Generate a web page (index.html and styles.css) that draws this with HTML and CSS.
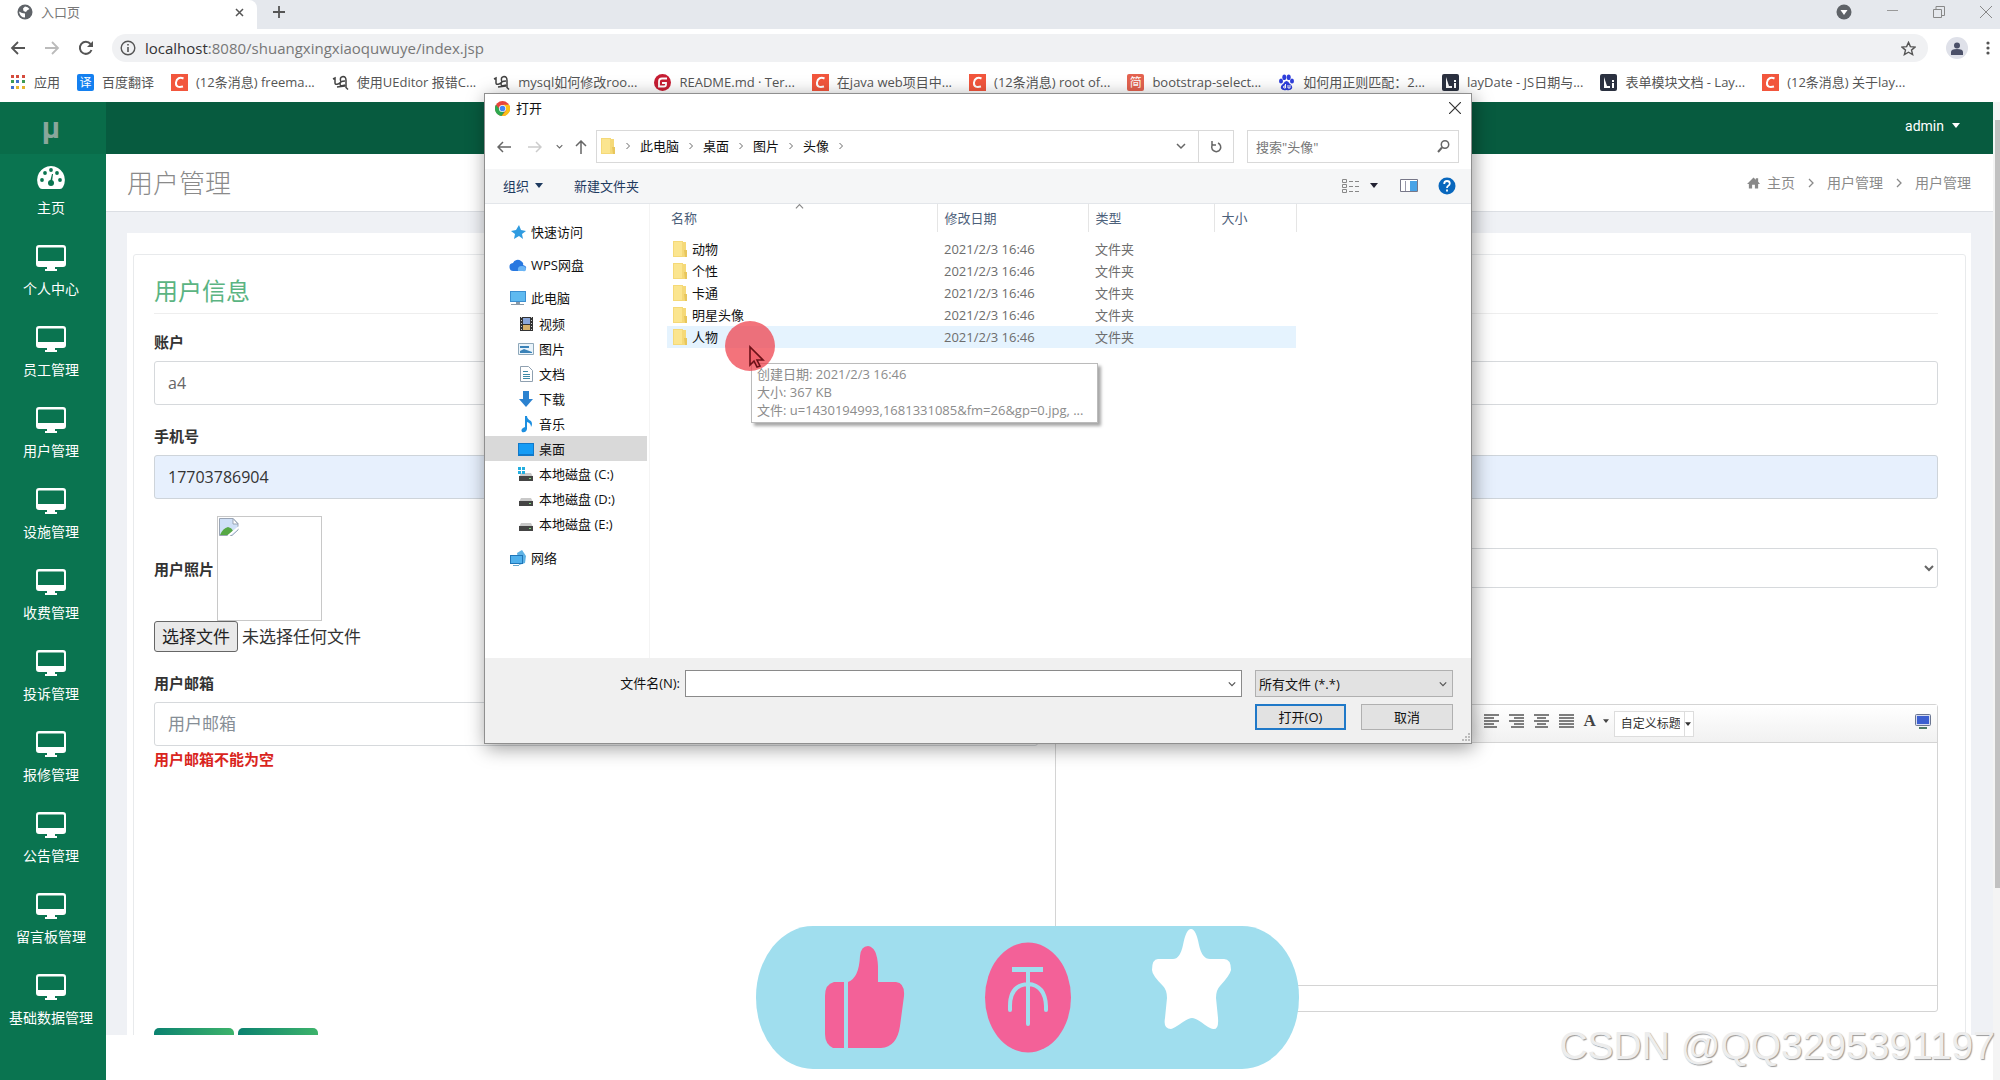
FILE: index.html
```html
<!DOCTYPE html>
<html lang="zh-CN">
<head>
<meta charset="utf-8">
<title>入口页</title>
<link rel="stylesheet" href="styles.css">
</head>
<body>
<svg class="defs" aria-hidden="true">
  <symbol id="monitor" viewBox="0 0 30 26"><path fill-rule="evenodd" d="M3 0h24q3 0 3 3v16q0 3-3 3h-8v2h2v2H9v-2h2v-2H3q-3 0-3-3V3q0-3 3-3zM3 2.500q-1 0-1 1V16h26V3.500q0-1-1-1z"/></symbol>
  <symbol id="folder" viewBox="0 0 16 18"><path fill="#f5d978" d="M1 1h10v1h3v15H1z"/><path fill="#fbe58f" d="M2 2h8v14H2z"/><path fill="#e8c65c" d="M12 10h3v7h-2z"/></symbol>
  <symbol id="csdn" viewBox="0 0 17 17"><path fill="#f2563d" d="M0 0h17v17H0z"/><path fill="none" stroke="#fff" stroke-width="2" d="M12.500 4.500C9 3 5.500 4 5 8.500s3 5 7 4"/></symbol>
  <symbol id="snail" viewBox="0 0 17 17"><path fill="none" stroke="#444" stroke-width="1.500" d="M1 5l2-1v5q0 2 3 1l3-2M9 8q-2-5 2-5.500 3 0 3 4v7l2 2M13 7q-5 0-5 3t5 1M5 13l8-1"/></symbol>
  <symbol id="lay" viewBox="0 0 17 17"><rect width="17" height="17" rx="2" fill="#2b3140"/><path fill="#fff" d="M4 3l3 9h3v2H4zM12 6h2v2h-2zM12 9h2v5h-2z"/></symbol>
  <symbol id="chev" viewBox="0 0 10 10"><path fill="none" stroke="currentColor" stroke-width="1.500" d="M1 3l4 4 4-4"/></symbol>
  <symbol id="gt" viewBox="0 0 8 10"><path fill="none" stroke="currentColor" stroke-width="1.300" d="M2 1l4 4-4 4"/></symbol>
  <symbol id="caret" viewBox="0 0 8 5"><path fill="currentColor" d="M0 0h8L4 5z"/></symbol>
  <symbol id="disk" viewBox="0 0 18 18"><path fill="#c9c9c9" d="M4 8h10l2 4H2z"/><path fill="#444" d="M2 11h14v5H2z"/><path fill="#7fd87f" d="M12 13h2v1h-2z"/></symbol>
</svg>

<header class="tabs">
  <div class="tab">
    <svg width="16" height="16" viewBox="0 0 16 16"><circle cx="8" cy="8" r="7.500" fill="#5f6368"/><path fill="#fff" d="M8 2.500q3 0 4.500 2.500L10 6.500 9 8 6.500 7 6 4.500zM2 7.500l3 1.500 3 .5v4q-5 0-6-6z"/></svg>
    <span>入口页</span>
    <button class="plain tab-close" aria-label="关闭标签页"><svg width="9" height="9" viewBox="0 0 9 9"><path stroke="#555" stroke-width="1.500" d="M1 1l7 7M8 1L1 8"/></svg></button>
  </div>
  <button class="plain" aria-label="新标签页"><svg width="12" height="12" viewBox="0 0 12 12"><path stroke="#555" stroke-width="1.800" d="M6 0v12M0 6h12"/></svg></button>
  <div class="window-controls">
    <svg width="16" height="16" viewBox="0 0 16 16"><circle cx="8" cy="8" r="7.500" fill="#5f6368"/><path fill="#fff" d="M4.500 6h7L8 11z"/></svg>
    <button class="plain" aria-label="最小化"><svg width="11" height="12" viewBox="0 0 11 12"><path stroke="#999" d="M0 4.500h11"/></svg></button>
    <button class="plain" aria-label="还原"><svg width="12" height="12" viewBox="0 0 12 12"><path fill="none" stroke="#888" d="M.5 3.500h8v8h-8zM3 3V.5h8.500v9H9"/></svg></button>
    <button class="plain" aria-label="关闭"><svg width="12" height="12" viewBox="0 0 12 12"><path stroke="#888" d="M0 0l12 12M12 0L0 12"/></svg></button>
  </div>
</header>

<div class="toolbar">
  <button class="plain" aria-label="后退"><svg width="16" height="16" viewBox="0 0 16 16"><path fill="none" stroke="#555" stroke-width="1.800" d="M15 8H2M8 2L2 8l6 6"/></svg></button>
  <button class="plain" aria-label="前进"><svg width="16" height="16" viewBox="0 0 16 16"><path fill="none" stroke="#bbb" stroke-width="1.800" d="M1 8h13M8 2l6 6-6 6"/></svg></button>
  <button class="plain" aria-label="刷新"><svg width="16" height="16" viewBox="0 0 16 16"><path fill="none" stroke="#555" stroke-width="2" d="M13.500 10A6 6 0 1 1 12.500 4"/><path fill="#555" d="M15 1v6H9z"/></svg></button>
  <div class="omnibox">
    <svg width="16" height="16" viewBox="0 0 16 16"><circle cx="8" cy="8" r="6.800" fill="none" stroke="#555" stroke-width="1.400"/><path stroke="#555" stroke-width="1.600" d="M8 7v5M8 4v1.600"/></svg>
    <span class="url"><b>localhost</b>:8080/shuangxingxiaoquwuye/index.jsp</span>
    <svg width="15" height="15" viewBox="0 0 16 16"><path fill="none" stroke="#555" stroke-width="1.500" d="M8 1.500l2 4.500 5 .5-3.800 3.200 1.200 4.800L8 12l-4.400 2.500 1.200-4.800L1 6.500 6 6z"/></svg>
  </div>
  <button class="plain avatar" aria-label="用户"><svg width="12" height="13" viewBox="0 0 12 13"><circle cx="6" cy="3.500" r="3" fill="#4b5068"/><path fill="#4b5068" d="M0 13v-3q0-3 6-3t6 3v3z"/></svg></button>
  <button class="plain" aria-label="菜单"><svg width="4" height="14" viewBox="0 0 4 14"><g fill="#555"><circle cx="2" cy="2" r="1.600"/><circle cx="2" cy="7" r="1.600"/><circle cx="2" cy="12" r="1.600"/></g></svg></button>
</div>

<nav class="bookmarks" aria-label="书签">
  <a href="#"><svg width="16" height="16" viewBox="0 0 16 16"><path fill="#d54b3d" d="M1 1h3v3H1zM6 1h3v3H6zM12 1h3v3h-3z"/><path fill="#3d9a56" d="M1 6h3v3H1zM12 6h3v3h-3z"/><path fill="#4070d0" d="M6 6h3v3H6zM1 12h3v3H1z"/><path fill="#e5b32d" d="M6 12h3v3H6zM12 12h3v3h-3z"/></svg><span>应用</span></a>
  <a href="#"><i class="badge blue">译</i><span>百度翻译</span></a>
  <a href="#"><svg width="17" height="17"><use href="#csdn"/></svg><span>(12条消息) freema...</span></a>
  <a href="#"><svg width="17" height="17"><use href="#snail"/></svg><span>使用UEditor 报错C...</span></a>
  <a href="#"><svg width="17" height="17"><use href="#snail"/></svg><span>mysql如何修改roo...</span></a>
  <a href="#"><svg width="17" height="17" viewBox="0 0 17 17"><circle cx="8.500" cy="8.500" r="8.500" fill="#c71d33"/><path fill="none" stroke="#fff" stroke-width="1.800" d="M13 4.500H8q-3 0-3 3v5h5q2 0 2-2V9H8"/></svg><span>README.md · Ter...</span></a>
  <a href="#"><svg width="17" height="17"><use href="#csdn"/></svg><span>在java web项目中...</span></a>
  <a href="#"><svg width="17" height="17"><use href="#csdn"/></svg><span>(12条消息) root of...</span></a>
  <a href="#"><i class="badge red">简</i><span>bootstrap-select...</span></a>
  <a href="#"><svg width="17" height="17" viewBox="0 0 17 17"><g fill="#2f3fdc"><ellipse cx="3" cy="7" rx="2" ry="2.600"/><ellipse cx="6.300" cy="3.200" rx="2" ry="2.800"/><ellipse cx="10.700" cy="3.200" rx="2" ry="2.800"/><ellipse cx="14" cy="7" rx="2" ry="2.600"/><path d="M8.500 7q2 0 3 2.500 3.500 2.500 2.500 5-1.500 2.500-5.500 1.500-4 1-5.500-1.500-1-2.500 2.500-5 1-2.500 3-2.500z"/></g><path fill="none" stroke="#fff" d="M7.500 10v4H6q-1-1 0-2h1M10 11v3h2v-3"/></svg><span>如何用正则匹配：2...</span></a>
  <a href="#"><svg width="17" height="17"><use href="#lay"/></svg><span>layDate - JS日期与...</span></a>
  <a href="#"><svg width="17" height="17"><use href="#lay"/></svg><span>表单模块文档 - Lay...</span></a>
  <a href="#"><svg width="17" height="17"><use href="#csdn"/></svg><span>(12条消息) 关于lay...</span></a>
</nav>

<div class="app">
  <aside class="sidebar">
    <div class="logo">μ</div>
    <nav aria-label="主菜单">
      <a href="#"><svg width="28" height="26" viewBox="0 0 28 26"><path d="M14 2a14 14 0 0 1 12 21q-1 2-3 2H5q-2 0-3-2A14 14 0 0 1 14 2z"/><g fill="#0a7450"><circle cx="5" cy="16" r="1.900"/><circle cx="8" cy="9" r="1.900"/><circle cx="14" cy="6" r="1.900"/><circle cx="20" cy="9" r="1.900"/><circle cx="23" cy="16" r="1.900"/><circle cx="14" cy="19" r="3"/><path d="M13 18l2-8h1l-1 8z"/></g></svg>主页</a>
      <a href="#"><svg width="30" height="26"><use href="#monitor"/></svg>个人中心</a>
      <a href="#"><svg width="30" height="26"><use href="#monitor"/></svg>员工管理</a>
      <a href="#"><svg width="30" height="26"><use href="#monitor"/></svg>用户管理</a>
      <a href="#"><svg width="30" height="26"><use href="#monitor"/></svg>设施管理</a>
      <a href="#"><svg width="30" height="26"><use href="#monitor"/></svg>收费管理</a>
      <a href="#"><svg width="30" height="26"><use href="#monitor"/></svg>投诉管理</a>
      <a href="#"><svg width="30" height="26"><use href="#monitor"/></svg>报修管理</a>
      <a href="#"><svg width="30" height="26"><use href="#monitor"/></svg>公告管理</a>
      <a href="#"><svg width="30" height="26"><use href="#monitor"/></svg>留言板管理</a>
      <a href="#"><svg width="30" height="26"><use href="#monitor"/></svg>基础数据管理</a>
    </nav>
  </aside>

  <div class="page">
    <div class="topbar"><button class="plain account">admin <svg width="8" height="5"><use href="#caret"/></svg></button></div>
    <div class="titlebar">
      <h1>用户管理</h1>
      <nav class="breadcrumb" aria-label="位置">
        <a href="#"><svg width="13" height="12" viewBox="0 0 14 12"><path fill="#888" d="M7 0l2.500 2.400V1H12v3.700L14 7h-2v5H8.500V8h-3v4H2V7H0z"/></svg>主页</a>
        <svg width="8" height="10"><use href="#gt"/></svg>
        <a href="#">用户管理</a>
        <svg width="8" height="10"><use href="#gt"/></svg>
        <span>用户管理</span>
      </nav>
    </div>
    <main class="content">
      <div class="panel">
        <form class="card">
          <h2>用户信息</h2>
          <div class="row">
            <div class="group"><label for="account">账户</label><input class="field" id="account" value="a4"></div>
            <div class="group end"><input class="field" aria-label="用户姓名"></div>
          </div>
          <div class="row tight">
            <div class="group"><label for="phone">手机号</label><input class="field filled" id="phone" value="17703786904"></div>
            <div class="group end"><input class="field filled" aria-label="身份证号"></div>
          </div>
          <div class="row">
            <div class="group">
              <div class="photo"><span class="caption">用户照片</span>
                <div class="preview" role="img" aria-label="用户照片"><svg width="20" height="18" viewBox="0 0 20 18"><path fill="#cfe0f7" stroke="#9aa5b5" d="M.5.5H14l5 5V12l-6 5.500H.5z"/><path fill="#fff" stroke="#9aa5b5" d="M14 .5V6h5z"/><path fill="#56a845" d="M1 17q3-7 8-8 4 1 5 4l-4 4z"/><path stroke="#fff" stroke-width="2" d="M9 18L20 9"/></svg></div>
              </div>
              <div class="file"><button type="button">选择文件</button><span>未选择任何文件</span></div>
            </div>
            <div class="group lower"><select class="field select" aria-label="性别"><option></option></select></div>
          </div>
          <div class="row last">
            <div class="group"><label for="mail">用户邮箱</label><input class="field" id="mail" placeholder="用户邮箱"><p class="error">用户邮箱不能为空</p></div>
            <div class="group lower">
              <div class="editor">
                <div class="editor-bar">
                  <button type="button" class="plain" aria-label="左对齐"><svg width="16" height="14" viewBox="0 0 16 14"><path stroke="#555" stroke-width="1.300" d="M0 1h15M0 4h10M0 7h15M0 10h10M0 13h13"/></svg></button>
                  <button type="button" class="plain" aria-label="右对齐"><svg width="16" height="14" viewBox="0 0 16 14"><path stroke="#555" stroke-width="1.300" d="M0 1h15M5 4h10M0 7h15M5 10h10M2 13h13"/></svg></button>
                  <button type="button" class="plain" aria-label="居中"><svg width="16" height="14" viewBox="0 0 16 14"><path stroke="#555" stroke-width="1.300" d="M0 1h15M3 4h9M0 7h15M3 10h9M1 13h13"/></svg></button>
                  <button type="button" class="plain" aria-label="两端对齐"><svg width="16" height="14" viewBox="0 0 16 14"><path stroke="#555" stroke-width="1.300" d="M0 1h15M0 4h15M0 7h15M0 10h15M0 13h15"/></svg></button>
                  <button type="button" class="plain font" aria-label="字体">A<svg width="6" height="4"><use href="#caret"/></svg></button>
                  <div class="heading-select"><select aria-label="标题"><option>自定义标题</option></select><svg width="6" height="4"><use href="#caret"/></svg></div>
                  <button type="button" class="plain full" aria-label="全屏"><svg width="16" height="15" viewBox="0 0 16 15"><rect x=".5" y=".5" width="15" height="11" rx="1" fill="#d6dcf0" stroke="#6a7590"/><path fill="#3c5fd0" d="M2 2h12v8H2z"/><path fill="#4d7a66" d="M4 13h8v2H4z"/></svg></button>
                </div>
                <textarea class="editor-body" aria-label="内容"></textarea>
                <div class="editor-foot"></div>
              </div>
            </div>
          </div>
          <div class="actions"><button type="button" aria-label="提交"></button><button type="button" aria-label="返回"></button></div>
        </form>
      </div>
    </main>
  </div>
  <div class="scrollbar"><div class="thumb"></div></div>
</div>

<section class="dialog" role="dialog" aria-label="打开">
  <div class="dialog-title">
    <svg width="15" height="15" viewBox="0 0 16 16"><circle cx="8" cy="8" r="8" fill="#e8453c"/><path fill="#2fa84f" d="M1 4a8 8 0 0 0 6 12l4-6H6z"/><path fill="#fbc116" d="M15 4H9l3 6-5 6A8 8 0 0 0 15 4z"/><circle cx="8" cy="8" r="3.800" fill="#fff"/><circle cx="8" cy="8" r="3" fill="#4286f5"/></svg>
    <span>打开</span>
    <button class="plain" aria-label="关闭"><svg width="12" height="12" viewBox="0 0 12 12"><path stroke="#333" stroke-width="1.200" d="M0 0l12 12M12 0L0 12"/></svg></button>
  </div>
  <div class="address">
    <div class="arrows">
      <svg width="14" height="12" viewBox="0 0 14 12"><path fill="none" stroke="#666" stroke-width="1.500" d="M14 6H1M6 1L1 6l5 5"/></svg>
      <svg width="14" height="12" viewBox="0 0 14 12"><path fill="none" stroke="#ccc" stroke-width="1.500" d="M0 6h13M8 1l5 5-5 5"/></svg>
      <svg width="7" height="7" class="grey"><use href="#chev"/></svg>
      <svg width="12" height="14" viewBox="0 0 12 14"><path fill="none" stroke="#666" stroke-width="1.500" d="M6 14V1M1 6l5-5 5 5"/></svg>
    </div>
    <div class="path">
      <svg class="path-icon" width="16" height="18"><use href="#folder"/></svg>
      <svg width="6" height="8"><use href="#gt"/></svg><span>此电脑</span>
      <svg width="6" height="8"><use href="#gt"/></svg><span>桌面</span>
      <svg width="6" height="8"><use href="#gt"/></svg><span>图片</span>
      <svg width="6" height="8"><use href="#gt"/></svg><span>头像</span>
      <svg width="6" height="8"><use href="#gt"/></svg>
      <svg class="path-drop" width="10" height="10"><use href="#chev"/></svg>
      <button class="plain refresh" aria-label="刷新"><svg width="12" height="13" viewBox="0 0 12 13"><path fill="none" stroke="#666" stroke-width="1.500" d="M8 3a4.500 4.500 0 1 1-5 1M2 1v4h4"/></svg></button>
    </div>
    <div class="search"><input aria-label="搜索" placeholder='搜索"头像"'><svg width="13" height="13" viewBox="0 0 13 13"><circle cx="8" cy="4.500" r="3.700" fill="none" stroke="#666" stroke-width="1.500"/><path stroke="#666" stroke-width="2" d="M5 7.500L1 12"/></svg></div>
  </div>
  <div class="commands">
    <button class="plain">组织 <svg width="8" height="5"><use href="#caret"/></svg></button>
    <button class="plain">新建文件夹</button>
    <div class="views">
      <svg width="18" height="14" viewBox="0 0 18 14"><path fill="none" stroke="#888" d="M.5.5h4v3h-4zM.5 5.500h4v3h-4zM.5 10.500h4v3h-4zM7 2.500h4M13 2.500h4M7 7.500h4M13 7.500h4M7 12.500h4M13 12.500h4"/></svg>
      <svg width="8" height="5"><use href="#caret"/></svg>
      <svg class="pane-icon" width="18" height="13" viewBox="0 0 18 13"><path fill="#fff" stroke="#778" d="M.5.5h17v12H.5z"/><path fill="#49a3e6" d="M10 2h7v10h-7z"/><path stroke="#99a" d="M5.500 2v10"/></svg>
      <svg width="18" height="18" viewBox="0 0 18 18"><circle cx="9" cy="9" r="8.500" fill="#0867bd"/><path fill="none" stroke="#fff" stroke-width="1.800" d="M6.200 7q0-3 2.800-3t2.800 2.500Q11.800 8 10 9q-1 .6-1 2M9 12.500v2"/></svg>
    </div>
  </div>
  <div class="browser">
    <ul class="tree">
      <li><svg width="18" height="18" viewBox="0 0 18 18"><path fill="#2f9be0" d="M10 2l2 5 5 1-4 3 1 5-4-3-5 3 1-5-4-3 5-1z"/></svg>快速访问</li>
      <li><svg width="18" height="18" viewBox="0 0 18 18"><path fill="#2878e0" d="M5 15a4 4 0 0 1-1-8 5 5 0 0 1 8-2q3 2 2 4 4 1 3 4-1 2-3 2z"/><path fill="#6bb5f5" d="M9 15q-1-5 4-5 4 0 4 3t-3 2z"/></svg>WPS网盘</li>
      <li><svg width="18" height="18" viewBox="0 0 18 18"><path fill="#3c8fd0" d="M1 2h16v11H1z"/><path fill="#5fbaf0" d="M2 3h14v9H2z"/><path fill="#8a9aa8" d="M7 13h4v2h4v1H2v-1h5z"/></svg>此电脑</li>
      <li class="sub"><svg width="18" height="18" viewBox="0 0 18 18"><path fill="#333" d="M3 2h13v14H3z"/><path fill="#8aa6d8" d="M6 3h7v6H6z"/><path fill="#d6b06a" d="M6 10h7v5H6z"/><path stroke="#ccc" stroke-dasharray="1 2" d="M4.500 2v14M14.500 2v14"/></svg>视频</li>
      <li class="sub"><svg width="18" height="18" viewBox="0 0 18 18"><path fill="#eaf4fb" stroke="#8fa8ba" d="M1.500 3.500h15v11h-15z"/><path fill="#3a82b8" d="M3 11l4-2 8 3v1H3zM3 6h9v2H3z"/></svg>图片</li>
      <li class="sub"><svg width="18" height="18" viewBox="0 0 18 18"><path fill="#fff" stroke="#8fa0b0" d="M3.500 1.500h8l4 4v11h-12z"/><path stroke="#3c8aa8" d="M6 6.500h5M6 9.500h7M6 11.500h7M6 13.500h7"/></svg>文档</li>
      <li class="sub"><svg width="18" height="18" viewBox="0 0 18 18"><path fill="#2b82d0" d="M6 1h6v8h4l-7 8-7-8h4z"/></svg>下载</li>
      <li class="sub"><svg width="18" height="18" viewBox="0 0 18 18"><path fill="#1d8fe0" d="M8 1h2q0 3 4 5 2 3 0 6 0-4-4-5v7q-1 4-5 3-2-3 3-5z"/></svg>音乐</li>
      <li class="sub selected"><svg width="18" height="18" viewBox="0 0 18 18"><path fill="#1178c8" d="M1 3h16v13H1z"/><path fill="#159cf5" d="M2 4h14v10H2z"/></svg>桌面</li>
      <li class="sub"><svg width="18" height="18" viewBox="0 0 18 18"><use href="#disk"/><path fill="#22aee0" d="M1 2h3v3H1zM5 2h3v3H5zM1 6h3v3H1zM5 6h3v3H5z"/></svg>本地磁盘 (C:)</li>
      <li class="sub"><svg width="18" height="18"><use href="#disk"/></svg>本地磁盘 (D:)</li>
      <li class="sub"><svg width="18" height="18"><use href="#disk"/></svg>本地磁盘 (E:)</li>
      <li><svg width="18" height="18" viewBox="0 0 18 18"><path fill="#5fb2e4" d="M8 4l5-3 4 6-1 7-6 2z"/><path fill="#2076b8" d="M1 6h13v9H1z"/><path fill="#4fb0ec" d="M2 7h11v7H2z"/><path fill="#68a8cc" d="M4 16h6v1H4z"/></svg>网络</li>
    </ul>
    <div class="files">
      <svg class="sort" width="9" height="9" viewBox="0 0 10 10"><path fill="none" stroke="#888" stroke-width="1.300" d="M1 7l4-4 4 4"/></svg>
      <table>
        <colgroup><col class="c-name"><col class="c-date"><col class="c-type"><col class="c-size"></colgroup>
        <thead><tr><th>名称</th><th>修改日期</th><th>类型</th><th>大小</th></tr></thead>
        <tbody>
          <tr><td><svg width="16" height="18"><use href="#folder"/></svg>动物</td><td>2021/2/3 16:46</td><td>文件夹</td><td></td></tr>
          <tr><td><svg width="16" height="18"><use href="#folder"/></svg>个性</td><td>2021/2/3 16:46</td><td>文件夹</td><td></td></tr>
          <tr><td><svg width="16" height="18"><use href="#folder"/></svg>卡通</td><td>2021/2/3 16:46</td><td>文件夹</td><td></td></tr>
          <tr><td><svg width="16" height="18"><use href="#folder"/></svg>明星头像</td><td>2021/2/3 16:46</td><td>文件夹</td><td></td></tr>
          <tr class="hover"><td><svg width="16" height="18"><use href="#folder"/></svg>人物</td><td>2021/2/3 16:46</td><td>文件夹</td><td></td></tr>
        </tbody>
      </table>
    </div>
  </div>
  <div class="dialog-foot">
    <label for="filename">文件名(N):</label>
    <div class="combo"><input id="filename"><svg width="8" height="8"><use href="#chev"/></svg></div>
    <div class="combo type"><select aria-label="文件类型"><option>所有文件 (*.*)</option></select><svg width="8" height="8"><use href="#chev"/></svg></div>
    <div class="buttons"><button class="primary">打开(O)</button><button>取消</button></div>
    <svg class="grip" width="9" height="9" viewBox="0 0 9 9"><path fill="#bbb" d="M7 1h2v2H7zM7 4h2v2H7zM7 7h2v2H7zM4 4h2v2H4zM4 7h2v2H4zM1 7h2v2H1z"/></svg>
  </div>
</section>

<div class="tooltip" role="tooltip">创建日期: 2021/2/3 16:46<br>大小: 367 KB<br>文件: u=1430194993,1681331085&amp;fm=26&amp;gp=0.jpg, ...</div>
<svg class="pointer" width="50" height="50" viewBox="0 0 50 50"><circle cx="25" cy="25" r="25" fill="#ef3d48" fill-opacity=".72"/><path fill="#f0606a" stroke="#6b1118" stroke-width="1.600" d="M25 26v18l4-4 3 6 3-1-3-6h6z"/></svg>

<div class="reactions">
  <svg viewBox="0 0 543 143" preserveAspectRatio="none">
    <rect width="543" height="143" rx="57" ry="71" fill="#a0deee"/>
    <g fill="#f36198"><path d="M88 56v66H77q-8-4-8-14V70q0-12 9-14z"/><path d="M92 122V56q11-4 12-26 1-10 8-10 9 1 10 20v16h18q9 1 8 14l-4 30q-3 21-19 22z"/><ellipse cx="272" cy="71.500" rx="43" ry="55"/></g>
    <g fill="none" stroke="#a0deee"><path stroke-width="5" d="M256 43.500h31"/><path stroke-width="4" stroke-linecap="round" d="M272 44v54M254 84v-4q0-21 18-22 17 1 18 22v4"/></g>
    <path fill="#fff" d="M435 3q5 0 8 16 3 14 11 14h14q7 0 7 11-1 5-11 16-4 4-4 12l2 20q1 12-5 11-3 0-12-7-6-4-9-4t-9 4q-10 7-12 7-8 0-6-11l2-20q0-8-4-12-11-11-11-16 0-12 7-11h14q7 0 10-14 3-16 8-16z"/>
  </svg>
</div>
<div class="watermark">CSDN @QQ3295391197</div>
</body>
</html>
```
FILE: styles.css
```css
* { box-sizing: border-box; }
body {
  margin: 0;
  height: 100vh;
  display: flex;
  flex-direction: column;
  position: relative;
  overflow: hidden;
  background: #fff;
  color: #333;
  font: 13px/20px "Open Sans", "Noto Sans CJK SC", sans-serif;
}
svg { display: block; flex: none; }
.defs { position: absolute; width: 0; height: 0; }
a { color: inherit; text-decoration: none; }
button, input, select, textarea { font: inherit; color: inherit; }
.plain { border: 0; padding: 0; background: none; display: flex; align-items: center; }

/* browser frame */
.tabs { display: flex; align-items: center; height: 29px; padding-bottom: 5px; background: #e5e8ed; }
.tab { display: flex; align-items: center; gap: 8px; align-self: stretch; width: 257px; margin-bottom: -5px; padding: 0 13px 5px 17px; margin-right: 16px; background: #fff; border-radius: 0 8px 0 0; color: #777; }
.tab-close { margin-left: auto; }
.window-controls { display: flex; align-items: center; gap: 35px; margin-left: auto; padding-right: 8px; }
.toolbar { display: flex; align-items: center; gap: 18px; height: 38px; padding: 0 10px; }
.omnibox { flex: 1; display: flex; align-items: center; gap: 9px; height: 28px; padding: 0 12px 0 8px; border-radius: 14px; background: #f0f1f3; }
.omnibox svg:last-child { margin-left: auto; }
.url { font-size: 15px; color: #777; }
.url b { font-weight: 400; color: #333; }
.avatar { justify-content: center; width: 22px; height: 22px; border-radius: 50%; background: #dfe1e9; }
.bookmarks { display: flex; align-items: center; gap: 17px; height: 35px; padding: 0 10px 5px; color: #555; }
.bookmarks a { display: flex; align-items: center; gap: 8px; white-space: nowrap; }
.badge { width: 17px; height: 17px; border-radius: 2px; color: #fff; font-size: 12px; line-height: 17px; font-style: normal; text-align: center; }
.blue { background: #1480f0; }
.red { background: #e46350; }

/* application shell */
.app { flex: 1; min-height: 0; display: flex; }
.sidebar { width: 106px; background: #0a7450; color: #fff; font-size: 14px; }
.logo { height: 52px; padding-right: 4px; background: #096c49; color: #8aa69b; font: bold 30px/52px Roboto, sans-serif; text-align: center; }
.sidebar a { display: flex; flex-direction: column; align-items: center; gap: 8px; height: 81px; padding: 10px 4px 0 0; white-space: nowrap; }
.sidebar svg { fill: #fff; }
.page { flex: 1; min-width: 0; display: flex; flex-direction: column; }
.topbar { display: flex; justify-content: flex-end; align-items: center; height: 52px; flex: none; padding: 0 33px 5px; background: #075b3f; }
.account { gap: 8px; color: #fff; font: 14px/20px Roboto, sans-serif; }
.titlebar { display: flex; justify-content: space-between; align-items: center; height: 58px; flex: none; padding: 0 22px 0 21px; border-bottom: 1px solid #dcdfe4; }
h1 { margin: 0; color: #8a8a8a; font-size: 26px; font-weight: 300; }
.breadcrumb { display: flex; align-items: center; gap: 12px; color: #8a8a8a; font-size: 14px; }
.breadcrumb a { display: flex; align-items: center; gap: 7px; }
.content { flex: 1; min-height: 0; overflow: hidden; margin-bottom: 45px; padding: 21px 22px 0 21px; background: #eff1f5; }
.panel { min-height: 100%; padding: 21px 5px 0 6px; background: #fff; }
.card { padding: 18px 27px 0 20px; border: 1px solid #e8eaec; border-radius: 3px; }
h2 { margin: 0 0 17px; padding-bottom: 4px; border-bottom: 1px solid #eee; color: #5bb482; font-size: 24px; line-height: 36px; font-weight: 400; }
.row { display: grid; grid-template-columns: 1fr 1fr; gap: 17px; margin-bottom: 20px; }
.tight { margin-bottom: 17px; }
.last { margin-bottom: 16px; }
.end { align-self: end; }
.lower { padding-top: 32px; }
.group label, .caption { display: block; margin-bottom: 8px; font-size: 15px; line-height: 22px; font-weight: 700; color: #333; }
.field { display: block; width: 100%; height: 44px; padding: 0 13px; border: 1px solid #d6d9dc; border-radius: 3px; background: #fff; color: #666; font-size: 16px; }
.field::placeholder { color: #868e96; font-size: 17px; }
.filled { background: #e7f0fd; border-color: #ced4da; color: #333; }
.select { height: 40px; padding: 0 4px; }
.photo { display: flex; align-items: center; gap: 3px; }
.caption { margin: 0; }
.preview { width: 105px; height: 105px; border: 1px solid #c8c8c8; padding: 1px; }
.file { display: flex; align-items: center; gap: 4px; height: 31px; font-size: 17px; }
.file button { height: 31px; padding: 0 7px; border: 1px solid #666; border-radius: 3px; background: #e9e9e9; color: #222; line-height: 24px; }
.error { margin: 2px 0 0; color: #d9251d; font-size: 15px; line-height: 22px; font-weight: 700; }
.editor { border: 1px solid #d4d4d4; border-radius: 3px; }
.editor-bar { display: flex; align-items: center; gap: 9px; height: 38px; padding: 0 6px 5px 428px; border-bottom: 1px solid #d4d4d4; background: linear-gradient(#fff, #f1f1f1); }
.font { gap: 7px; color: #444; font: bold 17px/20px "Liberation Serif", serif; }
.heading-select { display: flex; align-items: center; height: 26px; width: 80px; margin: 6px 0 0 -4px; border: 1px solid #ddd; background: #fff; }
.heading-select select { appearance: none; width: 70px; height: 24px; padding: 0 4px 0 6px; border: 0; border-right: 1px solid #ddd; background: none; font-size: 12px; }
.full { margin-left: auto; }
.editor-body { display: block; width: 100%; height: 242px; border: 0; padding: 8px; resize: none; }
.editor-foot { height: 26px; border-top: 1px solid #d4d4d4; }
.actions { display: flex; gap: 4px; }
.actions button { width: 80px; height: 36px; border: 0; border-radius: 5px; background: linear-gradient(90deg, #0b8270, #3db36b); }
.scrollbar { width: 7px; padding: 18px 0 0 2px; background: #f4f4f4; }
.thumb { height: 80%; background: #c1c1c1; }

/* file chooser window */
.dialog { position: absolute; left: 484px; top: 93px; width: 988px; height: 651px; display: flex; flex-direction: column; border: 1px solid #8f8f8f; background: #fff; color: #111; box-shadow: 2px 4px 18px rgba(0, 0, 0, .4); }
.dialog-title { display: flex; align-items: center; gap: 6px; height: 36px; padding: 0 10px 8px; }
.dialog-title button { margin-left: auto; }
.address { display: grid; grid-template-columns: 111px 638px 211px; height: 33px; justify-content: start; }
.arrows { display: grid; grid-template-columns: 38px 24px 24px 20px; align-items: center; justify-items: center; }
.path { display: flex; align-items: center; gap: 9px; padding: 0 0 2px 3px; border: 1px solid #d9d9d9; }
.path svg, .grey { color: #666; }
.path-drop { margin-left: auto; margin-right: 3px; }
.refresh { align-self: stretch; justify-content: center; width: 35px; margin-bottom: -2px; border-left: 1px solid #d9d9d9; }
.address { grid-template-columns: 111px 638px 212px; }
.search { display: flex; align-items: center; margin: 0 -13px 0 13px; border: 1px solid #d9d9d9; padding: 0 8px; }
.search input { flex: 1; min-width: 0; border: 0; padding: 0; background: none; }
.search input::placeholder { color: #777; }
.commands { display: flex; align-items: center; gap: 31px; height: 35px; margin-top: 6px; padding: 0 15px 1px 18px; border-bottom: 1px solid #e3e6ea; background: #f5f6f7; color: #1e3a5f; }
.commands .plain { gap: 6px; }
.views { display: flex; align-items: center; gap: 10px; margin-left: auto; color: #223; }
.pane-icon { margin: 0 10px 0 12px; }
.browser { flex: 1; display: flex; }
.tree { width: 165px; margin: 0; padding: 15px 2px 0 0; border-right: 1px solid #f4f4f4; list-style: none; }
.tree li { display: flex; align-items: center; gap: 4px; height: 25px; margin-bottom: 8px; padding-left: 24px; }
.tree li:nth-child(3) { margin-bottom: 1px; }
.tree .sub { margin-bottom: 0; padding-left: 32px; }
.tree .sub:nth-child(12) { margin-bottom: 9px; }
.tree .selected { background: #d9d9d9; }
.files { position: relative; padding-left: 17px; }
.sort { position: absolute; left: 145px; top: -2px; }
table { table-layout: fixed; width: 629px; border-collapse: collapse; }
.c-name { width: 270px; }
.c-date { width: 151px; }
.c-type { width: 126px; }
.c-size { width: 82px; }
th { height: 28px; padding: 0 0 0 7px; border-right: 1px solid #e5e5e5; color: #4c607a; font-weight: 400; line-height: 20px; text-align: left; }
th:first-child { padding-left: 4px; }
tbody::before { content: ""; display: block; height: 6px; }
td { height: 22px; padding: 0 0 0 7px; color: #6d6d6d; line-height: 22px; }
td:first-child { display: flex; align-items: center; gap: 4px; padding-left: 5px; color: #111; }
.hover { background: #e5f3fe; }
.dialog-foot { display: grid; grid-template-columns: 187px 557px 198px; column-gap: 13px; row-gap: 7px; height: 85px; padding: 12px 17px 0 0; background: #f0f0f0; align-content: start; position: relative; }
.dialog-foot label { line-height: 26px; text-align: right; margin-right: -8px; }
.combo { display: flex; align-items: center; height: 27px; padding-right: 5px; border: 1px solid #8a8a8a; background: #fff; color: #555; }
.combo input, .combo select { flex: 1; min-width: 0; height: 24px; border: 0; background: none; padding: 0 3px; color: #111; appearance: none; }
.combo.type { background: #e2e2e2; border-color: #b0b0b0; }
.buttons { grid-column: 3; display: grid; grid-template-columns: 91px 92px; justify-content: space-between; }
.buttons button { height: 26px; padding: 0; border: 1px solid #b0b0b0; background: #e2e2e2; color: #111; }
.buttons .primary { border: 2px solid #2079c8; }
.grip { position: absolute; right: 1px; bottom: 2px; }

/* floating layers */
.tooltip { position: absolute; left: 751px; top: 363px; width: 347px; padding: 1px 5px 3px; border: 1px solid #bbb; background: #fff; color: #8c8c8c; line-height: 18px; white-space: nowrap; box-shadow: 3px 3px 3px rgba(0, 0, 0, .35); }
.pointer { position: absolute; left: 725px; top: 321px; }
.reactions { position: absolute; left: 756px; bottom: 11px; width: 543px; height: 143px; }
.reactions svg { width: 100%; height: 100%; }
.watermark { position: absolute; right: 5px; bottom: 12px; color: #ededed; font: 39px/44px "Liberation Sans", sans-serif; text-shadow: 1px 1px 1px #999; }
```
